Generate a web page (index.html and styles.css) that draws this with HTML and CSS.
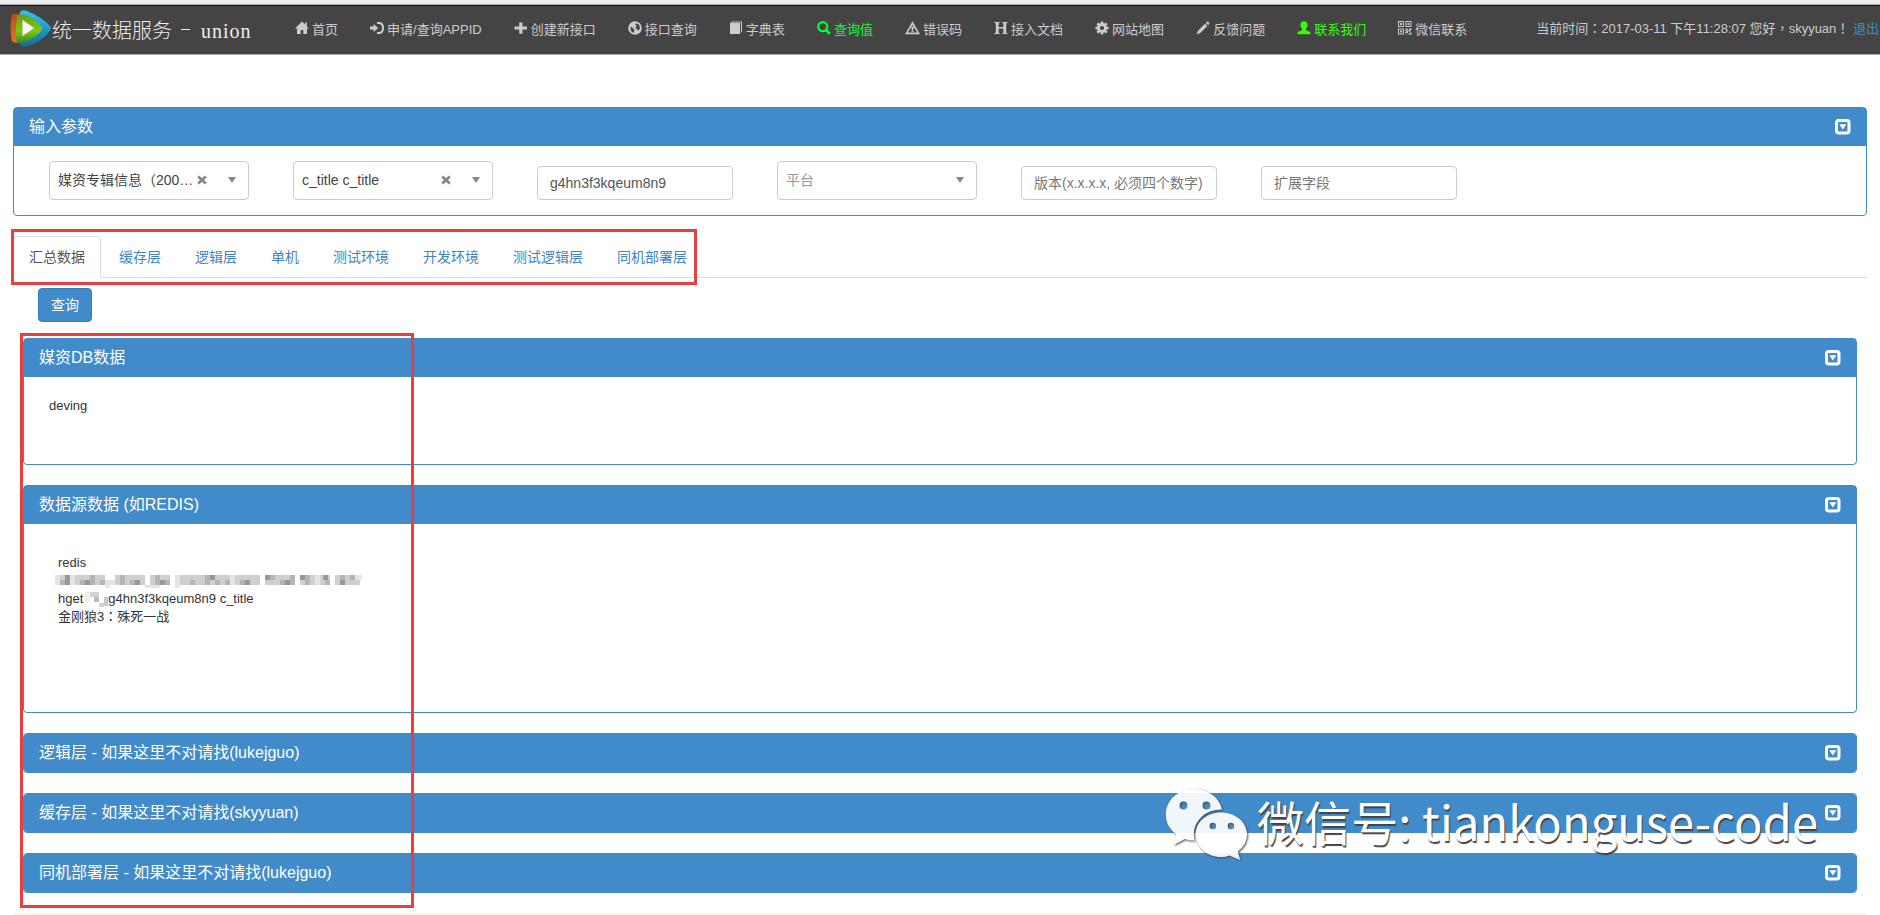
FILE: index.html
```
<!DOCTYPE html>
<html lang="zh-CN">
<head>
<meta charset="utf-8">
<title>统一数据服务 - union</title>
<link rel="stylesheet" href="styles.css">
</head>
<body>
<svg class="defs" width="0" height="0" aria-hidden="true">
  <symbol id="toggle" viewBox="0 0 16 16"><rect x="1.5" y="1.5" width="12.5" height="12.5" rx="2.2" fill="none" stroke="#fff" stroke-width="3"/><path d="M4.300 5.300h7L7.800 10.500z" fill="#fff"/></symbol>
</svg>
<header class="navbar">
  <div class="brand">
    <svg class="logo" viewBox="0 0 42 40">
      <defs>
        <linearGradient id="lb" x1="0" y1="0" x2="0" y2="1"><stop offset="0" stop-color="#2fc4f5"/><stop offset="1" stop-color="#0f6f9e"/></linearGradient>
        <linearGradient id="lg" x1="0" y1="0" x2="0" y2="1"><stop offset="0" stop-color="#6f9c12"/><stop offset=".6" stop-color="#7fc61c"/><stop offset="1" stop-color="#3d8a1a"/></linearGradient>
        <linearGradient id="lo" x1="0" y1="0" x2="0" y2="1"><stop offset="0" stop-color="#b8491a"/><stop offset="1" stop-color="#e8731f"/></linearGradient>
      </defs>
      <path d="M10 3Q12 0 17 2Q32 8 40 17Q42 19 40 22Q32 33 17 37Q11 39 9 34Q6 19 10 3z" fill="url(#lb)"/>
      <path d="M2 6Q4 4 9 5L9 33Q5 35 2 32Q-1 19 2 6z" fill="url(#lo)"/>
      <path d="M7 7Q10 4 15 6Q26 10 31 17Q33 19 31 22Q26 29 14 33Q8 35 6 31Q5 19 7 7z" fill="url(#lg)"/>
      <path d="M12.500 11L24 19L12.500 27z" fill="#f8f8f2"/>
    </svg>
    <span class="brand-cn">统一数据服务</span><span class="brand-dash"></span><span class="brand-en">union</span>
  </div>
  <nav class="menu">
    <a><svg viewBox="0 0 14 14"><path d="M7 .6L0 7.600H2V13H5.700V9H8.300V13H12V7.600H14L11.800 5.300V1.500H10V3.600z"/></svg>首页</a>
    <a><svg viewBox="0 0 14 14"><path d="M0 5.600H3.600V3L8.200 7L3.600 11V8.400H0z"/><path d="M7 2H9.500Q13 2.500 13 7T9.500 12H7" fill="none" stroke="currentColor" stroke-width="2"/></svg>申请/查询APPID</a>
    <a><svg viewBox="0 0 14 14"><path d="M5.200 1.500H8.400V5.500H13V8.600H8.400V12.700H5.200V8.600H.5V5.500H5.200z"/></svg>创建新接口</a>
    <a><svg viewBox="0 0 14 14"><path fill-rule="evenodd" d="M7 .2a6.800 6.800 0 100 13.600a6.800 6.800 0 000-13.600zM8 2.200L11 3.600L12 7.300L10.500 9.500L8.600 8L7.400 6.500L9 4.500L7.200 4zM2.300 5.400L4.800 7L6.500 9L5.700 12L3 10z"/></svg>接口查询</a>
    <a><svg viewBox="0 0 14 14"><path d="M3 .5H13V11.500H12V1.500H3.200L2.700 2H11V13H1V2.500z"/></svg>字典表</a>
    <a class="hot"><svg viewBox="0 0 14 14"><circle cx="5.700" cy="5.700" r="4.500" fill="none" stroke="currentColor" stroke-width="2.200"/><path d="M8.600 8.600L12.800 12.800" stroke="currentColor" stroke-width="2.700"/></svg>查询值</a>
    <a><svg class="wide" viewBox="0 0 15 14"><path fill-rule="evenodd" d="M7.500 .3L15 13.200H0zM7.500 3.700L2.700 11.600H12.300z"/><path d="M6.200 5.500H8.800L8.300 9H6.700zM6.500 9.500h2v1.500h-2z"/></svg>错误码</a>
    <a><svg viewBox="0 0 14 14"><path d="M.5 1H5.600V2L4.600 2.300V6H9.400V2.300L8.400 2V1H13.500V2L12.200 2.300V11.700L13.500 12V13H8.400V12L9.400 11.700V7.500H4.600V11.700L5.600 12V13H.5V12L1.800 11.700V2.300L.5 2z"/></svg>接入文档</a>
    <a><svg viewBox="0 0 14 14"><circle cx="7" cy="7" r="3.600" fill="none" stroke="currentColor" stroke-width="3"/><path d="M7 .4V3M7 11V13.600M.4 7H3M11 7H13.600M2.300 2.300L4 4M10 10L11.700 11.700M2.300 11.700L4 10M10 4L11.700 2.300" stroke="currentColor" stroke-width="2.500"/></svg>网站地图</a>
    <a><svg viewBox="0 0 14 14"><path d="M.5 13.500L2 9.700L9 2.700L11.300 5L4.300 12zM9.800 2L11 .8Q11.700.3 12.300.9L13.200 1.800Q13.800 2.400 13.200 3L12.100 4.200z"/></svg>反馈问题</a>
    <a class="hot-user"><svg viewBox="0 0 14 14"><path d="M7 .2Q10.600.2 10.600 4Q10.600 6.500 8.900 8V9.300L12.800 10.800Q13.600 11.200 13.600 13.200H.4Q.4 11.200 1.200 10.800L5.100 9.300V8Q3.400 6.500 3.400 4Q3.400.2 7 .2z"/></svg>联系我们</a>
    <a><svg viewBox="0 0 14 14"><path fill-rule="evenodd" d="M0 0H6V6H0zM1 1V5H5V1zM7.500 0H13.500V6H7.500zM8.500 1V5H12.500V1zM0 7.500H6V13.500H0zM1 8.500V12.500H5V8.500z"/><path d="M2 2H4V4H2zM9.500 2H11.500V4H9.500zM2 9.500H4V11.500H2zM7.500 7.500H9.500V9.500H11V7.500H13.500V9H12.500V10.500H10V12H7.500V10.500H8.500V9.500H7.500zM11.500 11.500H13.500V13.500H10.500V12.500H11.500zM7.500 12.700H9V13.500H7.500z"/></svg>微信联系</a>
  </nav>
  <div class="status">当前时间<span class="punct" lang="zh-TW">：</span>2017-03-11 下午11:28:07 您好<span class="punct" lang="zh-TW">，</span>skyyuan<span class="punct" lang="zh-TW">！</span> <a>退出</a></div>
</header>

<main class="page">
  <section class="panel">
    <h3 class="panel-head">输入参数<svg class="toggle"><use href="#toggle"/></svg></h3>
    <div class="fields">
      <div class="select"><span class="value">媒资专辑信息<span class="punct" lang="zh-TW">（</span>200…</span><svg class="clear" viewBox="0 0 10 10"><path d="M1.200 1.500L8.800 8.500M8.800 1.500L1.200 8.500"/></svg><i class="caret"></i></div>
      <div class="select"><span class="value">c_title c_title</span><svg class="clear" viewBox="0 0 10 10"><path d="M1.200 1.500L8.800 8.500M8.800 1.500L1.200 8.500"/></svg><i class="caret"></i></div>
      <input class="input" type="text" value="g4hn3f3kqeum8n9">
      <div class="select"><span class="value muted">平台</span><i class="caret"></i></div>
      <input class="input" type="text" placeholder="版本(x.x.x.x, 必须四个数字)">
      <input class="input" type="text" placeholder="扩展字段">
    </div>
  </section>

  <ul class="tabs">
    <li class="active">汇总数据</li><li>缓存层</li><li>逻辑层</li><li>单机</li><li>测试环境</li><li>开发环境</li><li>测试逻辑层</li><li>同机部署层</li>
  </ul>

  <div class="results">
    <button class="query" type="button">查询</button>
    <section class="panel">
      <h3 class="panel-head">媒资DB数据<svg class="toggle"><use href="#toggle"/></svg></h3>
      <div class="body db">deving</div>
    </section>
    <section class="panel">
      <h3 class="panel-head">数据源数据 (如REDIS)<svg class="toggle"><use href="#toggle"/></svg></h3>
      <div class="body source">
        <div>redis</div>
        <div class="masked"><svg width="312" height="15" viewBox="0 0 312 15" shape-rendering="crispEdges">
          <path fill="#e6e4e5" d="M0 2h5v10H0zM15 2h5v10h-5zM50 12h5v3h-5zM90 12h15v3H90zM120 12h5v3h-5zM50 7h10v5H50zM85 2h5v10h-5zM120 2h5v10h-5zM175 2h5v10h-5zM225 2h5v10h-5zM260 2h5v10h-5zM300 2h7v5h-7z"/>
          <path fill="#d0ced0" d="M5 2h5v10H5zM20 2h30v10H20zM60 2h30v10H60zM95 2h20v10H95zM125 2h50v10h-50zM180 2h25v10h-25zM210 2h30v10h-30zM245 2h15v10h-15zM265 2h10v10h-10zM280 2h20v10h-20zM300 7h5v5h-5z"/>
          <path fill="#b5b3b4" d="M5 7h5v5H5zM25 7h5v5h-5zM35 2h5v10h-5zM45 7h5v5h-5zM65 2h5v10h-5zM75 7h5v5h-5zM100 2h5v10h-5zM110 7h5v5h-5zM135 7h5v5h-5zM150 2h5v10h-5zM160 7h5v5h-5zM170 7h5v5h-5zM185 7h5v5h-5zM215 2h5v5h-5zM225 7h5v5h-5zM235 2h5v10h-5zM250 2h5v10h-5zM270 7h5v5h-5zM285 2h5v5h-5zM295 2h5v5h-5z"/>
          <path fill="#99979a" d="M10 2h5v10h-5zM30 7h5v5h-5zM80 7h5v5h-5zM105 7h5v5h-5zM155 2h5v5h-5zM190 7h5v5h-5zM210 2h5v5h-5zM230 7h5v5h-5zM245 2h5v5h-5zM268 2h5v5h-5zM285 7h5v5h-5z"/>
        </svg></div>
        <div class="line">hget<svg class="patch" width="25" height="16" viewBox="0 0 25 16" shape-rendering="crispEdges"><path fill="#f0eff0" d="M2 1h5v10H2z"/><path fill="#d2d2d2" d="M7 1h9v5H7zM12 6h4v5h-4zM16 12h5v4h-5z"/><path fill="#bbb" d="M11 6h5v5h-5z"/><path fill="#c8c8c8" d="M21 6h4v9h-4z"/></svg>g4hn3f3kqeum8n9 c_title</div>
        <div>金刚狼3<span class="punct" lang="zh-TW">：</span>殊死一战</div>
      </div>
    </section>
    <section class="panel closed"><h3 class="panel-head">逻辑层 - 如果这里不对请找(lukejguo)<svg class="toggle"><use href="#toggle"/></svg></h3></section>
    <section class="panel closed"><h3 class="panel-head">缓存层 - 如果这里不对请找(skyyuan)<svg class="toggle"><use href="#toggle"/></svg></h3></section>
    <section class="panel closed"><h3 class="panel-head">同机部署层 - 如果这里不对请找(lukejguo)<svg class="toggle"><use href="#toggle"/></svg></h3></section>
  </div>
  <div class="notice"></div>
</main>

<div class="mark mark-tabs"></div>
<div class="mark mark-results"></div>
<div class="watermark">
  <svg viewBox="0 0 90 76" width="88" height="76" preserveAspectRatio="none">
    <defs><mask id="m"><rect width="90" height="76" fill="#fff"/><circle cx="24" cy="20.500" r="4" fill="#000"/><circle cx="47.500" cy="20.500" r="4" fill="#000"/><ellipse cx="62.500" cy="49" rx="28" ry="24.500" fill="#000"/></mask>
    <mask id="n"><rect width="90" height="76" fill="#fff"/><circle cx="54" cy="41" r="3.300" fill="#000"/><circle cx="72.500" cy="41" r="3.300" fill="#000"/></mask></defs>
    <g fill="#fff">
      <path mask="url(#m)" d="M35 4C19 4 6 15 6 29.500C6 38 10 44.500 16.500 49L14 60L25.500 54Q30 55.500 35 55.500C51 55.500 64 45 64 29.500C64 15 51 4 35 4z"/>
      <path mask="url(#n)" d="M62.500 27.500C48 27.500 36.500 37 36.500 49.500S48 72 62.500 72Q67 72 71 70.500L82 75L79.500 66.500Q89 59.500 89 49.500C89 37 77 27.500 62.500 27.500z"/>
    </g>
  </svg>
  <span>微信号: tiankonguse-code</span>
</div>
</body>
</html>
```

FILE: styles.css
```
* { box-sizing: border-box; }
body {
  margin: 0;
  height: 915px;
  overflow: hidden;
  position: relative;
  background: #fff;
  color: #333;
  font: 14px/20px "Liberation Sans", "Noto Sans CJK SC", sans-serif;
}
.defs { position: absolute; }
.punct { font-family: "Noto Sans CJK TC", sans-serif; line-height: 1; }

.navbar {
  display: flex;
  align-items: center;
  height: 55px;
  padding-left: 10px;
  background: #444;
  border-top: 4px solid #eee;
  border-bottom: 1px solid #aaa;
  box-shadow: inset 0 1px #aaa, inset 0 2px #181818;
  color: #ccc;
  font-size: 13px;
  white-space: nowrap;
}
.brand { display: flex; align-items: center; width: 285px; color: #eee; }
.logo { width: 42px; height: 40px; }
.brand-cn { padding-top: 3px; font-size: 20px; font-weight: 300; }
.brand-dash { width: 9px; height: 1px; margin: 0 11px 0 9px; background: #eee; }
.brand-en { padding-top: 4px; font: 20px "Liberation Serif", serif; letter-spacing: 1px; }
.menu { display: flex; height: 50px; align-items: center; padding-top: 2px; }
.menu a { display: flex; align-items: center; gap: 3px; margin-right: 32.050px; }
.menu svg { width: 14px; height: 14px; fill: currentColor; position: relative; top: -2px; }
.menu svg.wide { width: 15px; }
.hot { color: #0f3; }
.hot-user { color: #3f0; }
.status { margin-left: auto; padding-bottom: 1px; margin-right: 1px; }
.status a { color: #428bca; }

.page { padding: 52px 13px 0; }
.panel { border: 1px solid #428bca; border-radius: 4px; background: #fff; margin-bottom: 20px; }
.panel-head {
  display: flex;
  align-items: center;
  justify-content: space-between;
  height: 38px;
  margin: 0;
  padding: 0 15px;
  background: #428bca;
  color: #fff;
  font-size: 16px;
  font-weight: 400;
}
.toggle { width: 16px; height: 16px; }
.closed .panel-head { border-radius: 3px; }

.fields { display: flex; align-items: flex-end; gap: 44px; padding: 15px 35px; height: 69px; }
.select {
  display: flex;
  align-items: center;
  width: 200px;
  height: 39px;
  padding: 0 12px 2px 8px;
  border: 1px solid #ccc;
  border-radius: 4px;
  color: #444;
}
.value { flex: 1; overflow: hidden; white-space: nowrap; }
.muted { color: #999; }
.clear { width: 10px; height: 10px; margin-right: 21px; stroke: #888; stroke-width: 2.800; }
.caret { border: 4px solid transparent; border-top: 6px solid #888; border-bottom: 0; }
.input {
  width: 196px;
  height: 34px;
  padding: 6px 12px;
  border: 1px solid #ccc;
  border-radius: 4px;
  color: #555;
  font: inherit;
}
.input::placeholder { color: #777; opacity: 1; }

.tabs { display: flex; margin: 0; padding: 0; height: 42px; list-style: none; border-bottom: 1px solid #ddd; }
.tabs li { height: 42px; margin-right: 2px; padding: 10px 15px; border: 1px solid transparent; border-radius: 4px 4px 0 0; color: #4085c2; }
.tabs .active { background: #fff; border-color: #ddd #ddd #fff; color: #555; }

.results { padding: 10px 10px 0; }
.query {
  display: block;
  width: 54px;
  height: 34px;
  margin: 0 0 16px 15px;
  padding: 0;
  background: #428bca;
  border: 1px solid #357ebd;
  border-radius: 4px;
  color: #fff;
  font: inherit;
}
.body { font-size: 13px; line-height: 18px; }
.db { height: 87px; padding: 20px 25px; }
.source { height: 188px; padding: 30px 34px; }
.masked { height: 18px; margin-left: -3px; }
.masked svg { display: block; position: relative; top: 1px; }
.line { display: flex; align-items: center; height: 18px; }
.notice { height: 4px; background: #fcf3e4; }

.mark { position: absolute; border: 3px solid #e93f41; }
.mark-tabs { left: 11px; top: 229px; width: 686px; height: 56px; }
.mark-results { left: 20px; top: 333px; width: 394px; height: 575px; }

.watermark {
  position: absolute;
  left: 1160px;
  top: 784px;
  display: flex;
  align-items: flex-start;
  color: #fff;
  font: 47px/75px "Noto Sans CJK SC", sans-serif;
  white-space: nowrap;
  text-shadow: 1px 2px 1px #444;
}
.watermark svg { margin-top: 1px; opacity: .93; filter: drop-shadow(1px 1px 1px #444); }
.watermark span { margin: -1px 0 0 9px; letter-spacing: .1px; }
```
